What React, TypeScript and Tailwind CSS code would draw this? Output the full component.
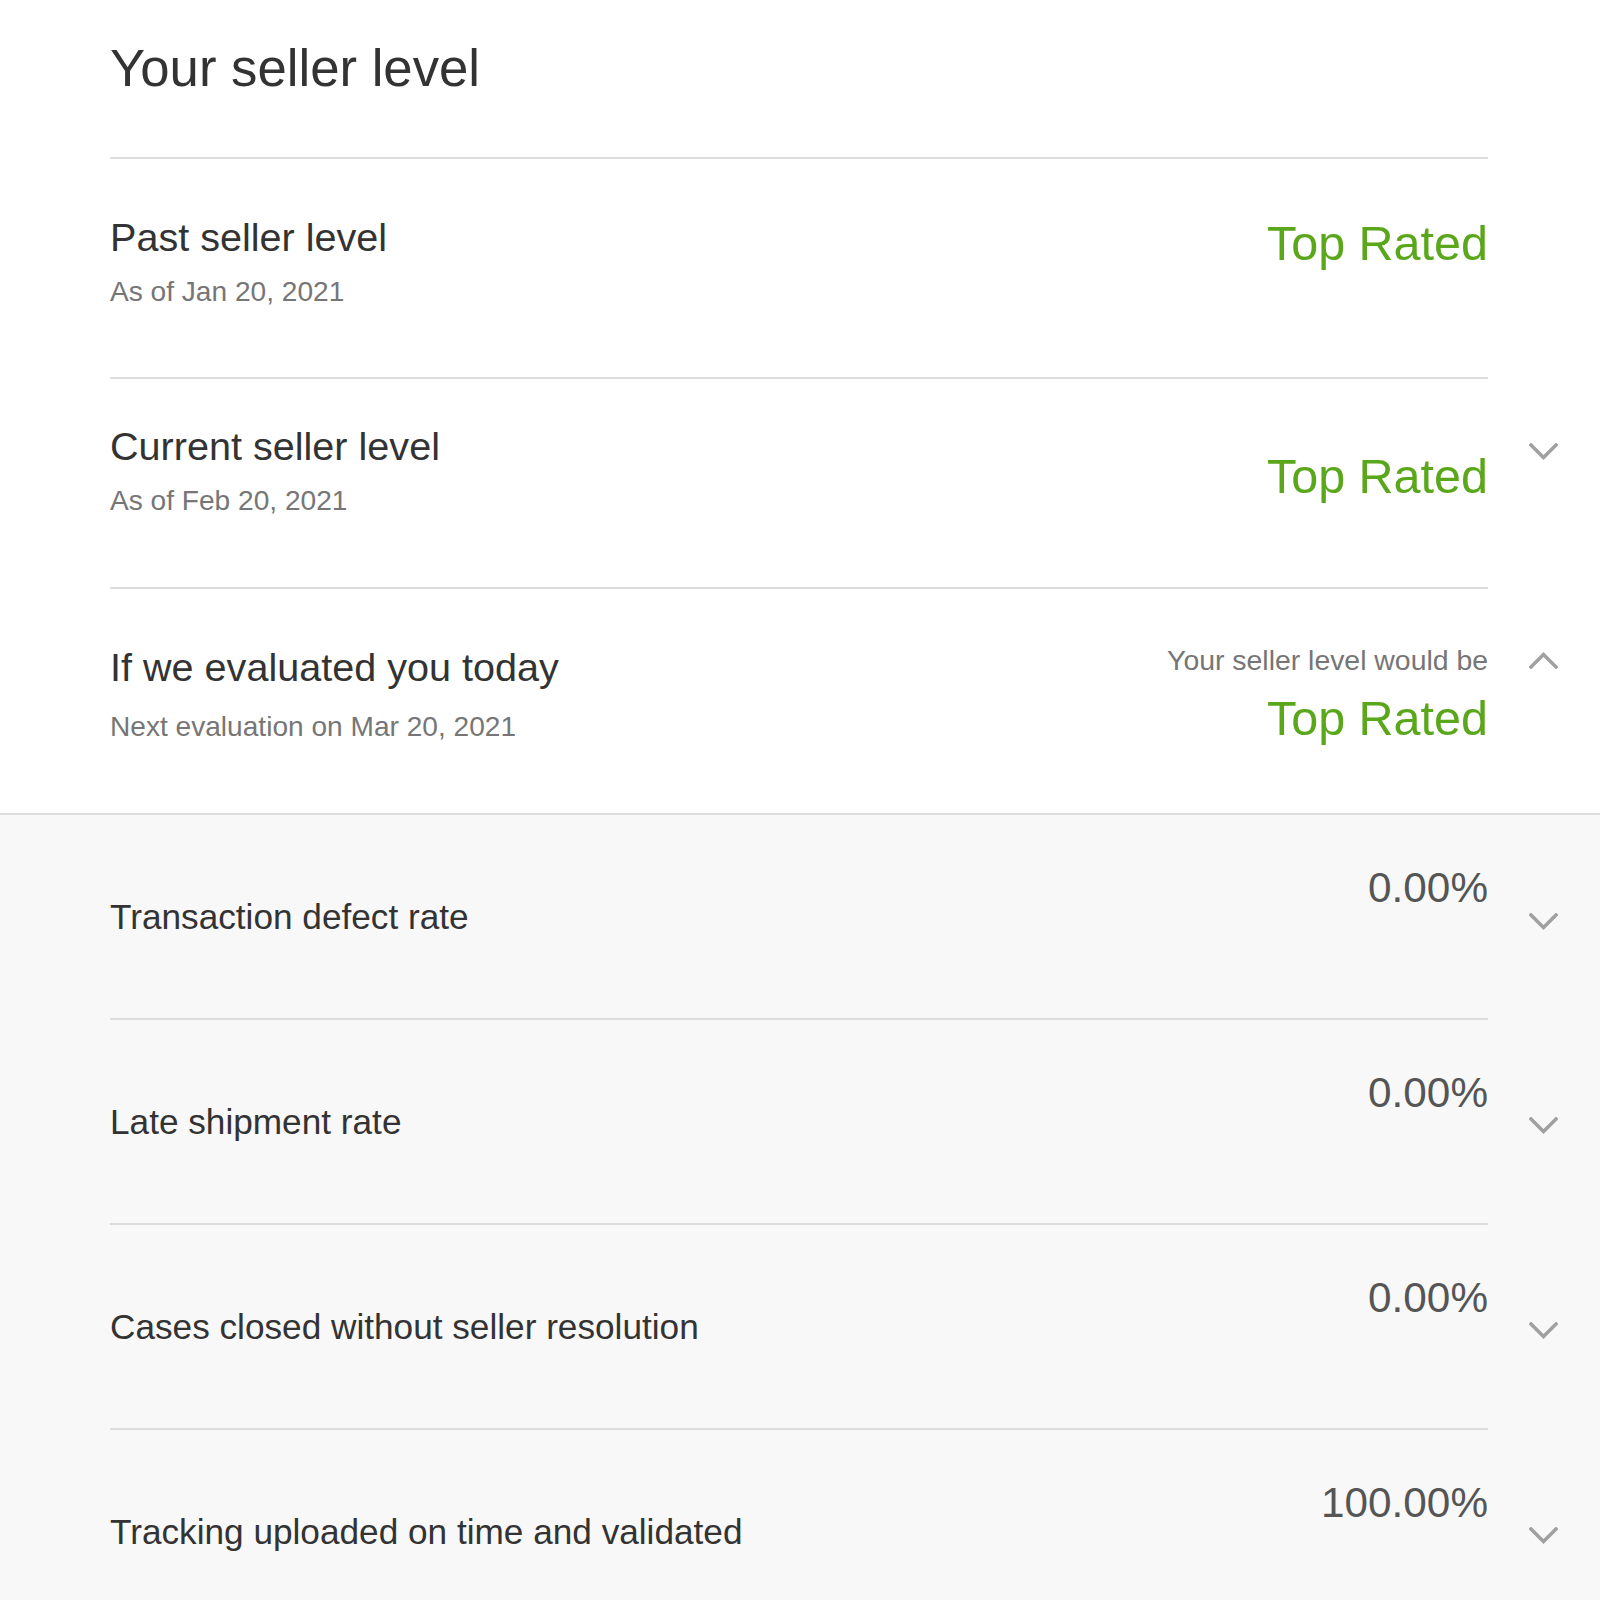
import React from "react";

const Chevron = ({ up = false }: { up?: boolean }) => (
  <svg width="29" height="17" viewBox="0 0 29 17" fill="none" className="block">
    <polyline
      points={up ? "2,15 14.5,2.5 27,15" : "2,2 14.5,14.5 27,2"}
      stroke="#a0a0a0"
      strokeWidth="3.5"
      strokeLinecap="square"
      strokeLinejoin="miter"
    />
  </svg>
);

const metrics = [
  { label: "Transaction defect rate", value: "0.00%" },
  { label: "Late shipment rate", value: "0.00%" },
  { label: "Cases closed without seller resolution", value: "0.00%" },
  { label: "Tracking uploaded on time and validated", value: "100.00%" },
];

export default function App() {
  return (
    <div className="w-[1600px] bg-white text-[#333333]" style={{ fontFamily: '"Liberation Sans", Arial, sans-serif' }}>
      {/* Title */}
      <div className="pl-[110px] pt-[42px] pb-[63px]">
        <h1 className="text-[52.7px] leading-[52px] font-normal text-[#333333]">Your seller level</h1>
      </div>

      {/* Row 1: Past seller level */}
      <div className="flex">
        <div className="ml-[110px] w-[1378px] h-[220px] border-t-2 border-[#dddddd] flex justify-between items-start">
          <div className="pt-[58px]">
            <div className="text-[39.6px] leading-[40px] text-[#333333]">Past seller level</div>
            <div className="mt-[21px] text-[28.1px] leading-[28px] text-[#767676]">As of Jan 20, 2021</div>
          </div>
          <div className="pt-[60px] text-[48.5px] leading-[48px] text-[#5ba71b]">Top Rated</div>
        </div>
      </div>

      {/* Row 2: Current seller level */}
      <div className="flex">
        <div className="ml-[110px] w-[1378px] h-[210px] border-t-2 border-[#dddddd] flex justify-between items-start">
          <div className="pt-[47px]">
            <div className="text-[39.6px] leading-[40px] text-[#333333]">Current seller level</div>
            <div className="mt-[21px] text-[28.1px] leading-[28px] text-[#767676]">As of Feb 20, 2021</div>
          </div>
          <div className="pt-[73px] text-[48.5px] leading-[48px] text-[#5ba71b]">Top Rated</div>
        </div>
        <div className="ml-[41px] pt-[66px]">
          <Chevron />
        </div>
      </div>

      {/* Row 3: If we evaluated you today */}
      <div className="flex">
        <div className="ml-[110px] w-[1378px] h-[226px] border-t-2 border-[#dddddd] flex justify-between items-start">
          <div className="pt-[58px]">
            <div className="text-[39.6px] leading-[40px] text-[#333333]">If we evaluated you today</div>
            <div className="mt-[26px] text-[28.1px] leading-[28px] text-[#767676]">Next evaluation on Mar 20, 2021</div>
          </div>
          <div className="pt-[57px] flex flex-col items-end">
            <div className="text-[28.4px] leading-[28px] text-[#767676]">Your seller level would be</div>
            <div className="mt-[20px] text-[48.5px] leading-[48px] text-[#5ba71b]">Top Rated</div>
          </div>
        </div>
        <div className="ml-[41px] pt-[65px]">
          <Chevron up />
        </div>
      </div>

      {/* Metrics section */}
      <div className="border-t-2 border-[#dddddd] bg-[#f8f8f8]">
        {metrics.map((m, i) => (
          <div key={m.label} className="flex">
            <div
              className={
                i === 0
                  ? "ml-[110px] w-[1378px] h-[203px] flex justify-between items-start"
                  : "ml-[110px] w-[1378px] h-[205px] border-t-2 border-[#dddddd] flex justify-between items-start"
              }
            >
              <div className="pt-[84px] text-[35.2px] leading-[35px] text-[#333333]">{m.label}</div>
              <div className="pt-[52px] text-[42.3px] leading-[42px] text-[#555555]">{m.value}</div>
            </div>
            <div className={i === 0 ? "ml-[41px] pt-[98px]" : "ml-[41px] pt-[99px]"}>
              <Chevron />
            </div>
          </div>
        ))}
      </div>
    </div>
  );
}
